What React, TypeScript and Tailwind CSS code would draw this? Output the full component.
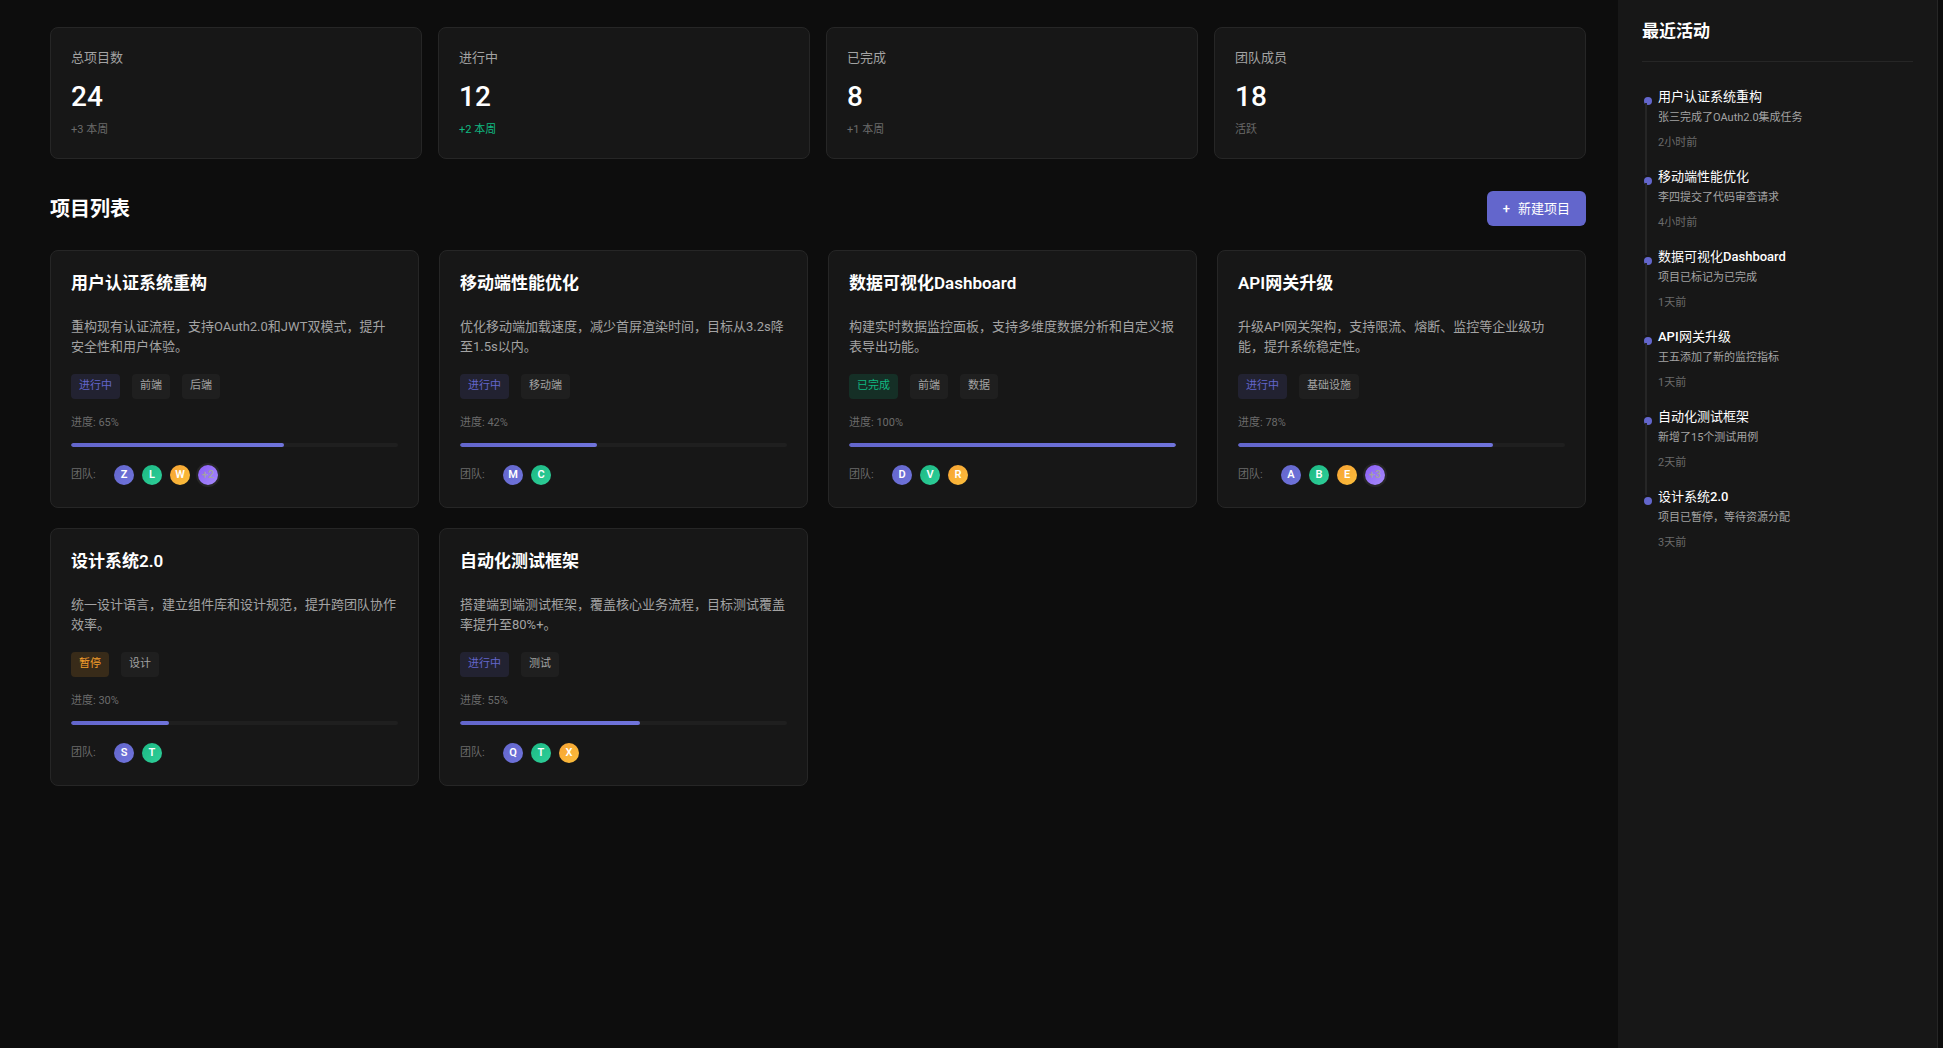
type Tone = 'primary' | 'success' | 'warning';

type Project = {
  title: string;
  description: string;
  status: string;
  tone: Tone;
  tags: string[];
  progress: number;
  members: string[];
  more?: number;
};

const stats = [
  { label: '总项目数', value: 24, note: '+3 本周' },
  { label: '进行中', value: 12, note: '+2 本周', positive: true },
  { label: '已完成', value: 8, note: '+1 本周' },
  { label: '团队成员', value: 18, note: '活跃' },
];

const projects: Project[] = [
  {
    title: '用户认证系统重构',
    description: '重构现有认证流程，支持OAuth2.0和JWT双模式，提升安全性和用户体验。',
    status: '进行中',
    tone: 'primary',
    tags: ['前端', '后端'],
    progress: 65,
    members: ['Z', 'L', 'W'],
    more: 2,
  },
  {
    title: '移动端性能优化',
    description: '优化移动端加载速度，减少首屏渲染时间，目标从3.2s降至1.5s以内。',
    status: '进行中',
    tone: 'primary',
    tags: ['移动端'],
    progress: 42,
    members: ['M', 'C'],
  },
  {
    title: '数据可视化Dashboard',
    description: '构建实时数据监控面板，支持多维度数据分析和自定义报表导出功能。',
    status: '已完成',
    tone: 'success',
    tags: ['前端', '数据'],
    progress: 100,
    members: ['D', 'V', 'R'],
  },
  {
    title: 'API网关升级',
    description: '升级API网关架构，支持限流、熔断、监控等企业级功能，提升系统稳定性。',
    status: '进行中',
    tone: 'primary',
    tags: ['基础设施'],
    progress: 78,
    members: ['A', 'B', 'E'],
    more: 3,
  },
  {
    title: '设计系统2.0',
    description: '统一设计语言，建立组件库和设计规范，提升跨团队协作效率。',
    status: '暂停',
    tone: 'warning',
    tags: ['设计'],
    progress: 30,
    members: ['S', 'T'],
  },
  {
    title: '自动化测试框架',
    description: '搭建端到端测试框架，覆盖核心业务流程，目标测试覆盖率提升至80%+。',
    status: '进行中',
    tone: 'primary',
    tags: ['测试'],
    progress: 55,
    members: ['Q', 'T', 'X'],
  },
];

const activities = [
  { title: '用户认证系统重构', text: '张三完成了OAuth2.0集成任务', time: '2小时前' },
  { title: '移动端性能优化', text: '李四提交了代码审查请求', time: '4小时前' },
  { title: '数据可视化Dashboard', text: '项目已标记为已完成', time: '1天前' },
  { title: 'API网关升级', text: '王五添加了新的监控指标', time: '1天前' },
  { title: '自动化测试框架', text: '新增了15个测试用例', time: '2天前' },
  { title: '设计系统2.0', text: '项目已暂停，等待资源分配', time: '3天前' },
];

const toneClasses: Record<Tone, string> = {
  primary: 'bg-[#6366cc]/15 text-[#6366cc]',
  success: 'bg-[#10b981]/15 text-[#10b981]',
  warning: 'bg-[#f59e2b]/15 text-[#f59e2b]',
};

const avatarClasses = [
  'from-[#6366cc] to-[#7074dc]',
  'from-[#1bb883] to-[#2fd09a]',
  'from-[#f7a233] to-[#fbbf3c]',
];

const ProjectCard = ({ project }: { project: Project }) => {
  return (
    <article className="rounded-lg border border-[#262626] bg-[#171717] p-5">
      <h3 className="text-[17px] font-semibold leading-6 text-white">{project.title}</h3>
      <p className="mt-[22px] text-[13px] leading-5 text-[#a3a3a3]">{project.description}</p>
      <div className="mt-[17px] flex gap-3 text-[11px] leading-4">
        <span className={`rounded px-2 pt-1 pb-[5px] ${toneClasses[project.tone]}`}>
          {project.status}
        </span>
        {project.tags.map((tag) => (
          <span key={tag} className="rounded bg-[#1f1f1f] px-2 pt-1 pb-[5px] text-[#a3a3a3]">
            {tag}
          </span>
        ))}
      </div>
      <div className="mt-4 text-[11px] leading-4 text-[#6b6b6b]">进度: {project.progress}%</div>
      <div className="mt-3 h-1 overflow-hidden rounded-sm bg-[#1f1f1f]">
        <div
          className="h-full rounded-sm bg-linear-to-r from-[#6366cc] to-[#7074dc]"
          style={{ width: `${project.progress}%` }}
        />
      </div>
      <div className="mt-4 flex h-6 items-center">
        <span className="w-[43px] text-[11px] leading-4 text-[#6b6b6b]">团队:</span>
        <div className="flex gap-2">
          {project.members.map((member, i) => (
            <span
              key={member}
              className={`flex size-5 items-center justify-center rounded-full bg-linear-135 text-[11px] font-semibold leading-4 text-white ${avatarClasses[i]}`}
            >
              {member}
            </span>
          ))}
          {project.more && (
            <span className="flex size-5 items-center justify-center rounded-full bg-linear-135 from-[#8b5cf6] to-[#a78bfa] text-[11px] font-medium leading-4 text-[#a3a3a3] ring-2 ring-[#262626]">
              +{project.more}
            </span>
          )}
        </div>
      </div>
    </article>
  );
};

const App = () => {
  return (
    <div
      lang="zh-CN"
      className="flex min-h-screen bg-[#0d0d0d] pr-[5px] font-[Roboto,'Noto_Sans_CJK_SC',sans-serif]"
    >
      <main className="min-w-0 flex-1 pt-[27px] pr-8 pb-8 pl-[50px]">
        <section className="grid grid-cols-4 gap-4">
          {stats.map((stat) => (
            <div key={stat.label} className="rounded-lg border border-[#262626] bg-[#171717] p-5">
              <div className="text-[13px] leading-5 text-[#a3a3a3]">{stat.label}</div>
              <div className="mt-2 text-[28px] font-medium leading-[42px] text-white">
                {stat.value}
              </div>
              <div
                className={`mt-1 text-[11px] leading-4 ${stat.positive ? 'text-[#10b981]' : 'text-[#6b6b6b]'}`}
              >
                {stat.note}
              </div>
            </div>
          ))}
        </section>

        <div className="mt-8 mb-6 flex items-center justify-between">
          <h2 className="text-xl font-semibold leading-8 text-white">项目列表</h2>
          <button
            type="button"
            className="flex items-center gap-2 rounded-md bg-[#6366cc] px-4 py-2 font-[Roboto,sans-serif] text-[13px] font-medium leading-[19px] text-white"
          >
            <span>+</span>
            新建项目
          </button>
        </div>

        <section className="grid grid-cols-4 gap-5">
          {projects.map((project) => (
            <ProjectCard key={project.title} project={project} />
          ))}
        </section>
      </main>

      <aside className="w-80 shrink-0 border-r border-[#262626] bg-[#171717] px-6 pt-[18px]">
        <h2 className="border-b border-[#262626] pb-[17px] text-[17px] font-semibold leading-[26px] text-white">
          最近活动
        </h2>
        <ul className="mt-[25px]">
          {activities.map((item, i) => (
            <li key={item.title} className="relative h-20 pl-4">
              <span className="absolute top-[10px] left-[2px] size-2 rounded-full bg-[#6366cc]" />
              {i < activities.length - 1 && (
                <span className="absolute top-4 left-[3px] h-[72px] w-0.5 bg-[#262626]" />
              )}
              <div className="font-[Roboto,sans-serif] text-[13px] font-medium leading-5 text-white">
                {item.title}
              </div>
              <div className="mt-[3px] text-[11px] leading-4 text-[#a3a3a3]">{item.text}</div>
              <div className="mt-[9px] text-[11px] leading-4 text-[#6b6b6b]">{item.time}</div>
            </li>
          ))}
        </ul>
      </aside>
    </div>
  );
};

export default App;
